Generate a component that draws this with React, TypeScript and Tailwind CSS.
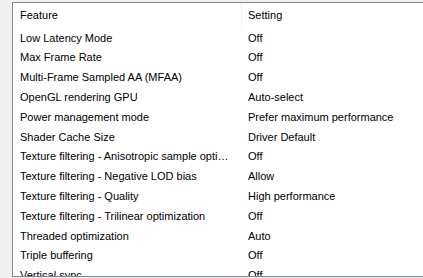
const rows: [string, string][] = [
  ["Low Latency Mode", "Off"],
  ["Max Frame Rate", "Off"],
  ["Multi-Frame Sampled AA (MFAA)", "Off"],
  ["OpenGL rendering GPU", "Auto-select"],
  ["Power management mode", "Prefer maximum performance"],
  ["Shader Cache Size", "Driver Default"],
  ["Texture filtering - Anisotropic sample optimization", "Off"],
  ["Texture filtering - Negative LOD bias", "Allow"],
  ["Texture filtering - Quality", "High performance"],
  ["Texture filtering - Trilinear optimization", "Off"],
  ["Threaded optimization", "Auto"],
  ["Triple buffering", "Off"],
  ["Vertical sync", "Off"],
];

export default function App() {
  return (
    <div
      className="w-[423px] h-[278px] overflow-hidden bg-[#f0f0f0] pl-3 pt-[2px] text-[11px] text-black"
      style={{ fontFamily: '"Liberation Sans", Arial, sans-serif' }}
    >
      <div className="h-[275px] overflow-hidden border-l border-t border-b border-[#828790] bg-white">
        <div className="flex h-[25px] items-center">
          <div className="w-[228px] shrink-0 pl-[7px]">Feature</div>
          <div className="h-full border-l border-dotted border-[#e8e8d8]" />
          <div className="pl-[6px]">Setting</div>
        </div>
        {rows.map(([feature, setting]) => (
          <div key={feature} className="flex h-[19.8px] items-center">
            <div className="w-[228px] shrink-0 truncate pl-[7px] pr-[8px]">
              {feature}
            </div>
            <div className="pl-[7px]">{setting}</div>
          </div>
        ))}
      </div>
    </div>
  );
}
